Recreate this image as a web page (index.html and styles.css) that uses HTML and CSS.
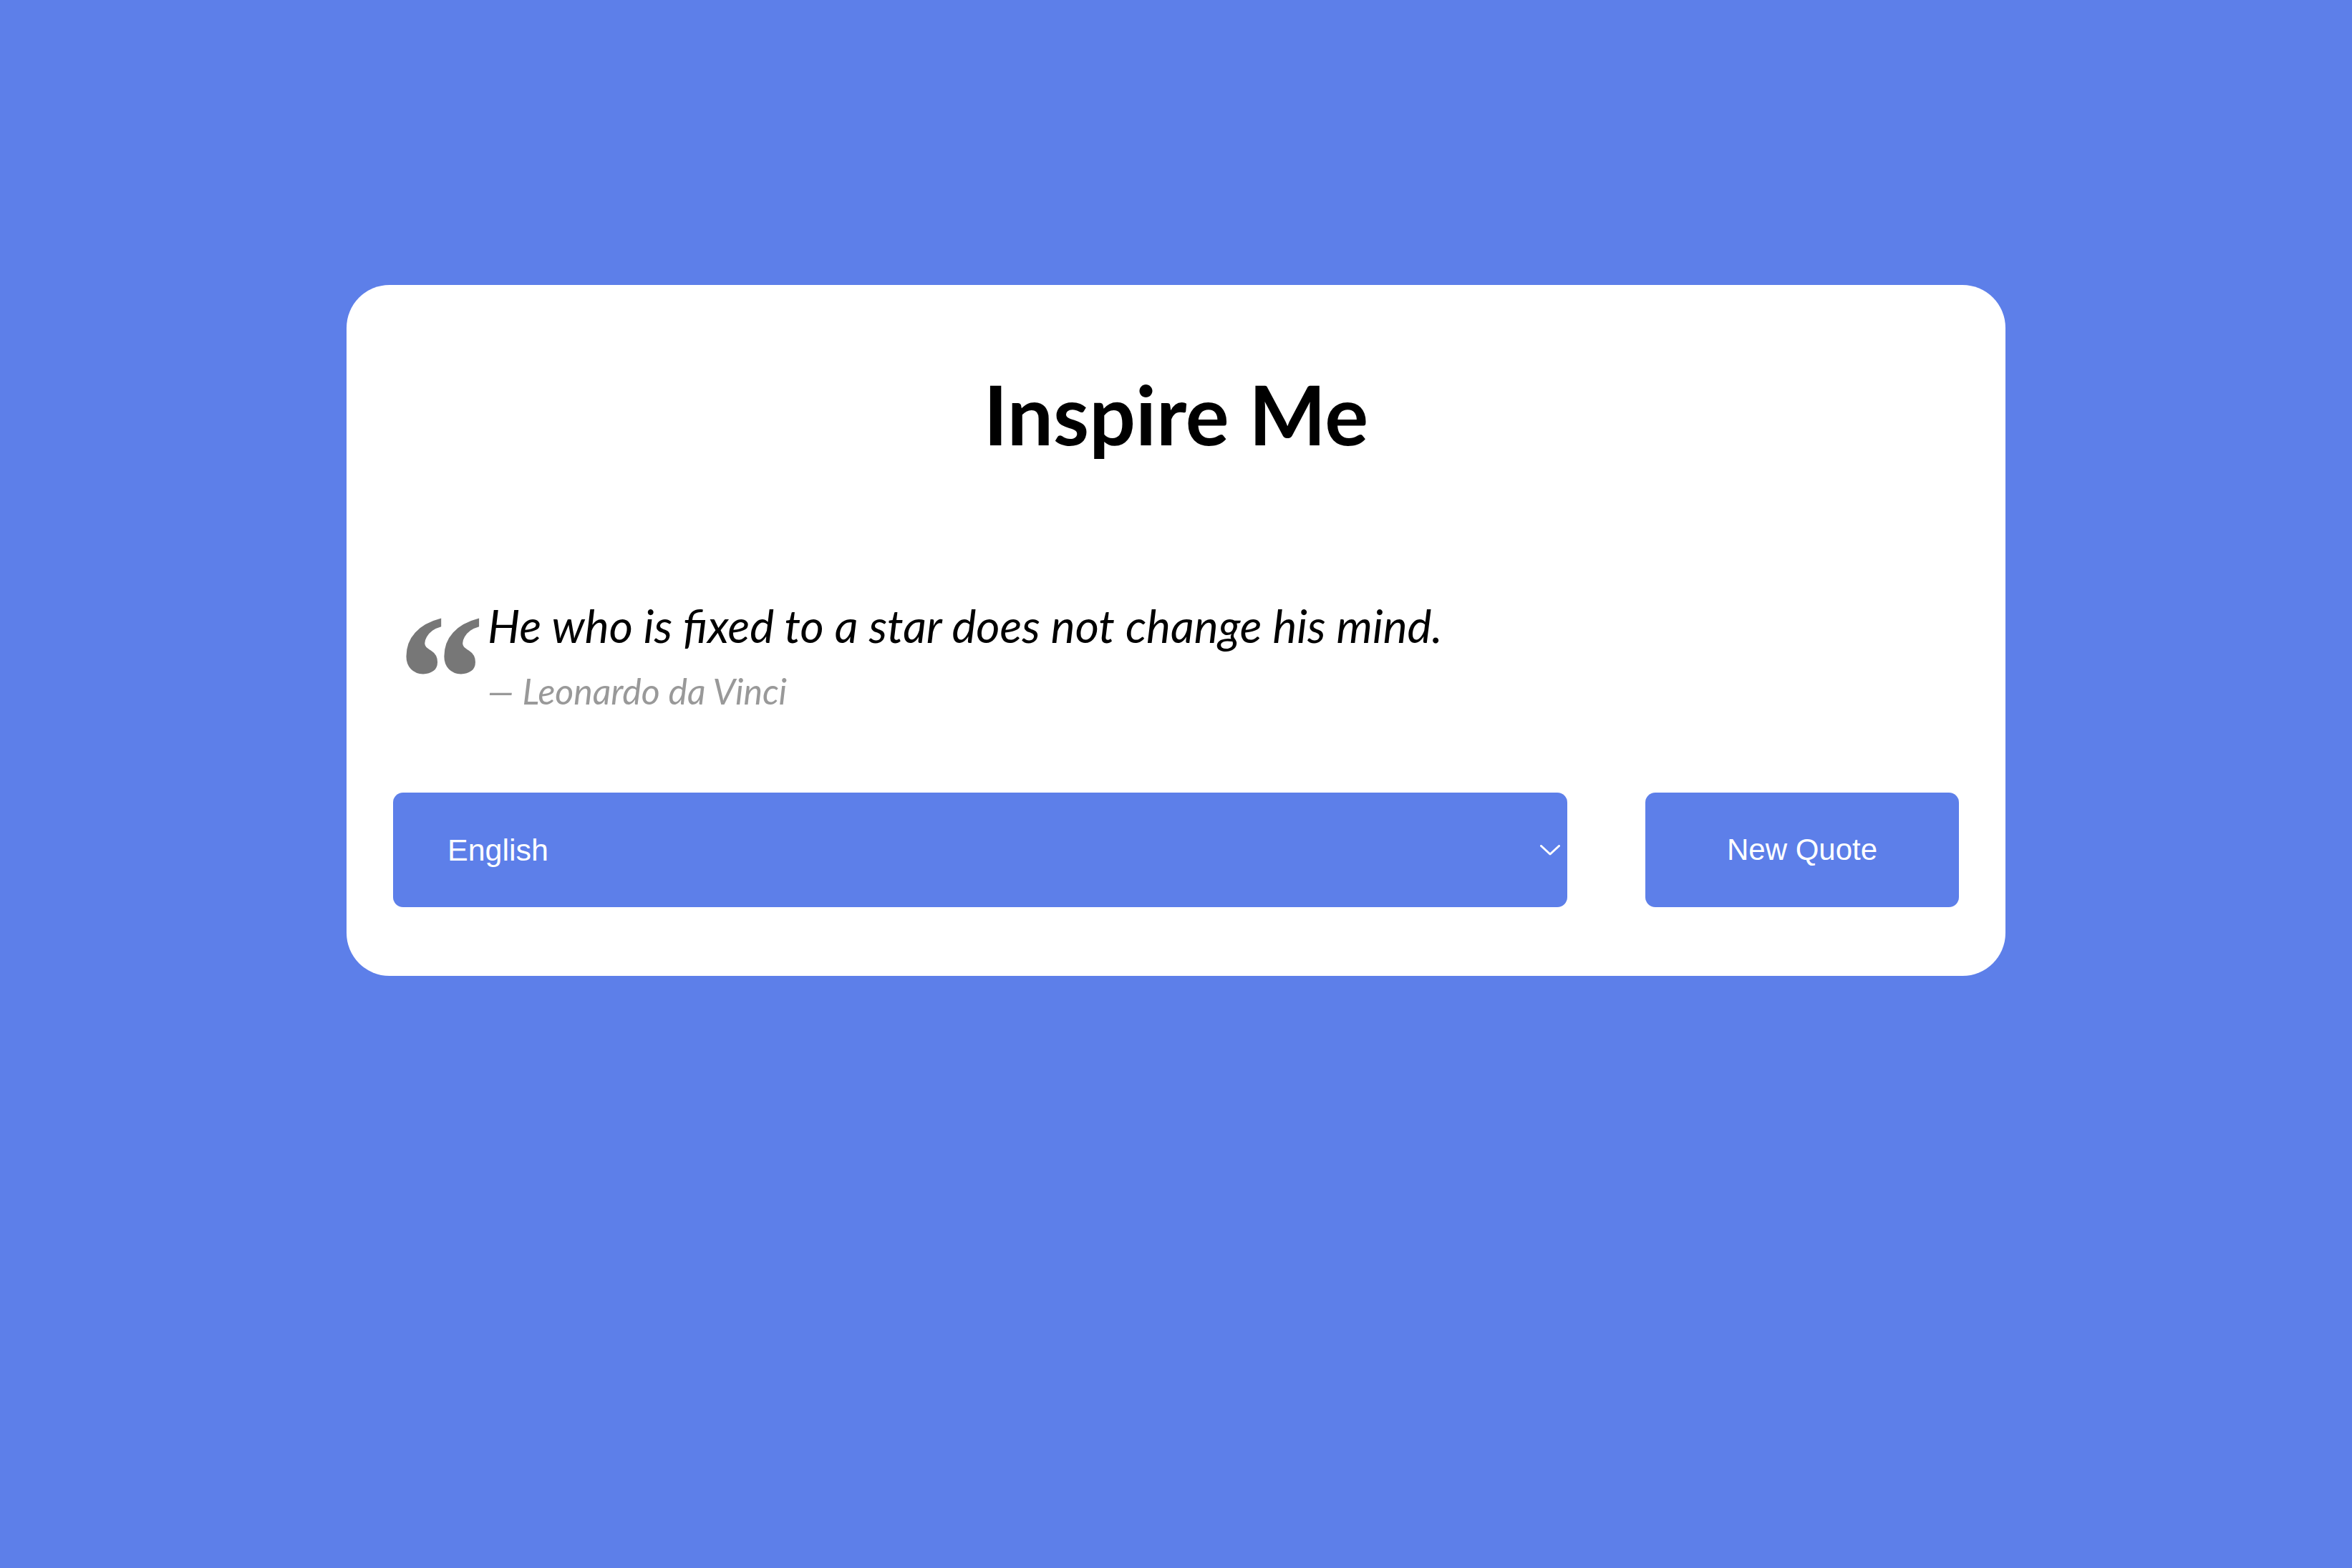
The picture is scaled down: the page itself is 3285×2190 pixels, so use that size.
FILE: index.html
```html
<!DOCTYPE html>
<html lang="en">
<head>
<meta charset="utf-8">
<title>Inspire Me</title>
<link rel="stylesheet" href="styles.css">
</head>
<body>
<main class="card">
  <h1 class="title">Inspire Me</h1>
  <blockquote class="quote">
    <span class="quote-mark" aria-hidden="true">&ldquo;</span>
    <p class="quote-text">He who is fixed to a star does not change his mind.</p>
    <p class="quote-author">&mdash; Leonardo da Vinci</p>
  </blockquote>
  <div class="controls">
    <div class="select-wrap">
      <select class="lang-select">
        <option>English</option>
      </select>
      <svg class="chevron" width="28" height="15" viewBox="0 0 28 15" aria-hidden="true">
        <polyline points="1.5,1.5 14,13 26.5,1.5" fill="none" stroke="#fff" stroke-width="3" stroke-linecap="round" stroke-linejoin="round"/>
      </svg>
    </div>
    <button class="new-quote" type="button">New Quote</button>
  </div>
</main>
</body>
</html>
```

FILE: styles.css
```css
html, body {
  margin: 0;
  padding: 0;
}

body {
  background: #5d7fe9;
  min-height: 2190px;
  padding-top: 398px;
  box-sizing: border-box;
  font-family: "Lato", "Liberation Sans", sans-serif;
}

.card {
  width: 2317px;
  margin: 0 auto;
  box-sizing: border-box;
  background: #ffffff;
  border-radius: 60px;
  padding: 64px 65px 96px;
}

.title {
  margin: 48px 0 0;
  text-align: center;
  font-family: "Lato", sans-serif;
  font-weight: 700;
  font-size: 114px;
  line-height: 1.2;
  color: #000;
}

.quote {
  position: relative;
  margin: 186px 0 0;
  padding-left: 132px;
}

.quote-mark {
  position: absolute;
  left: -6px;
  top: -14px;
  font-family: "Liberation Serif", serif;
  font-style: italic;
  font-weight: 700;
  font-size: 258px;
  line-height: 1;
  color: #777777;
}

.quote-text {
  margin: 0;
  font-style: italic;
  font-weight: 400;
  font-size: 64px;
  line-height: 82px;
  color: #000;
}

.quote-author {
  margin: 22px 0 0;
  font-style: italic;
  font-size: 50px;
  line-height: 56px;
  color: #999999;
}

.controls {
  display: flex;
  gap: 109px;
  margin-top: 114px;
}

.select-wrap {
  position: relative;
  flex: 1;
  display: flex;
}

.lang-select {
  flex: 1;
  height: 160px;
  appearance: none;
  -webkit-appearance: none;
  border: none;
  border-radius: 14px;
  background: #5d7fe9;
  color: #ffffff;
  font-family: "Liberation Sans", Arial, sans-serif;
  font-size: 43px;
  padding: 0 80px 0 76px;
  outline: none;
}

.chevron {
  position: absolute;
  right: 10px;
  top: 73px;
}

.new-quote {
  width: 438px;
  height: 160px;
  border: none;
  border-radius: 14px;
  background: #5d7fe9;
  color: #ffffff;
  font-family: "Liberation Sans", Arial, sans-serif;
  font-size: 42px;
  cursor: pointer;
}
```
